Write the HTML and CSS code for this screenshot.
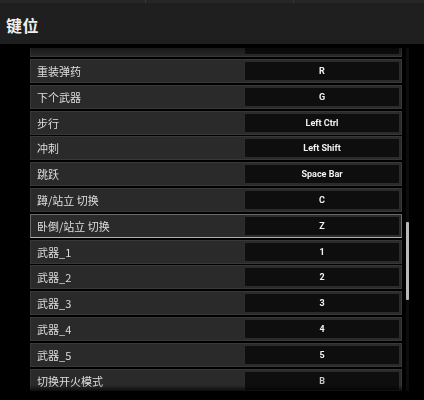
FILE: index.html
```html
<!DOCTYPE html>
<html lang="zh">
<head>
<meta charset="utf-8">
<link rel="stylesheet" href="styles.css">
</head>
<body>
<div class="tabs">
  <div class="tab t1"></div>
  <div class="tab t2"></div>
  <div class="tab t3"></div>
</div>
<header class="header"><h1 class="title">键位</h1></header>
<main class="content">
  <div class="viewport">
    <div class="list">
      <div class="row partial"><div class="label"></div><div class="key"></div></div>
      <div class="row"><div class="label">重装弹药</div><div class="key">R</div></div>
      <div class="row"><div class="label">下个武器</div><div class="key">G</div></div>
      <div class="row"><div class="label">步行</div><div class="key">Left Ctrl</div></div>
      <div class="row"><div class="label">冲刺</div><div class="key">Left Shift</div></div>
      <div class="row"><div class="label">跳跃</div><div class="key">Space Bar</div></div>
      <div class="row"><div class="label">蹲/站立 切换</div><div class="key">C</div></div>
      <div class="row selected"><div class="label">卧倒/站立 切换</div><div class="key">Z</div></div>
      <div class="row"><div class="label">武器_1</div><div class="key">1</div></div>
      <div class="row"><div class="label">武器_2</div><div class="key">2</div></div>
      <div class="row"><div class="label">武器_3</div><div class="key">3</div></div>
      <div class="row"><div class="label">武器_4</div><div class="key">4</div></div>
      <div class="row"><div class="label">武器_5</div><div class="key">5</div></div>
      <div class="row last"><div class="label">切换开火模式</div><div class="key">B</div></div>
    </div>
  </div>
  <div class="track"><div class="thumb"></div></div>
</main>
</body>
</html>
```

FILE: styles.css
```css
* { box-sizing: border-box; margin: 0; padding: 0; }
html, body { width: 424px; height: 400px; overflow: hidden; background: #000; }
body { font-family: "Noto Sans CJK SC", "Noto Sans", sans-serif; color: #ddd; }

.tabs { height: 3px; display: flex; background: #262626; }
.tab { height: 3px; }
.t1 { width: 146px; border-right: 1px solid #3a3a3a; }
.t2 { width: 148px; border-right: 1px solid #3a3a3a; }
.t3 { flex: 1; }

.header {
  height: 41px;
  background: #1f1f1f;
  display: flex;
  align-items: center;
  padding-left: 6px;
  padding-top: 2px;
}
.title { font-size: 16px; font-weight: bold; color: #f0f0f0; letter-spacing: 0.5px; }

.content {
  position: relative;
  height: 356px;
  padding-top: 4px;
  padding-left: 30px;
}
.viewport {
  width: 372px;
  height: 343px;
  overflow: hidden;
  -webkit-mask-image: linear-gradient(to bottom, rgba(0,0,0,0.6) 0, #000 9px, #000 337px, rgba(0,0,0,0.3) 343px);
  mask-image: linear-gradient(to bottom, rgba(0,0,0,0.6) 0, #000 9px, #000 337px, rgba(0,0,0,0.3) 343px);
}
.list {
  margin-top: -14.8px;
  display: flex;
  flex-direction: column;
  gap: 1.8px;
}
.row {
  height: 24px;
  display: flex;
  background: #2a2a2a;
  border: 1px solid #383838;
}
.row.selected {
  border-color: #6a6a6a;
  border-bottom-color: #b0b0b0;
}
.label {
  width: 213px;
  padding-left: 6px;
  font-size: 11px;
  line-height: 22px;
  color: #dedede;
}
.key {
  flex: 1;
  margin: 1px 1px 1px 0;
  background: #0e0e0e;
  border: 1px solid #2c2c2c;
  font-family: Roboto, "Liberation Sans", sans-serif;
  font-size: 9px;
  font-weight: bold;
  color: #f2f2f2;
  display: flex;
  align-items: center;
  justify-content: center;
}
.row.last .key { color: #c8c8c8; }

.track {
  position: absolute;
  left: 406px;
  top: 4px;
  width: 3px;
  height: 343px;
  background: #0c0c0c;
}
.thumb {
  position: absolute;
  left: 0;
  top: 174px;
  width: 3px;
  height: 78px;
  background: #b8b8b8;
  border-radius: 1px;
}
```
